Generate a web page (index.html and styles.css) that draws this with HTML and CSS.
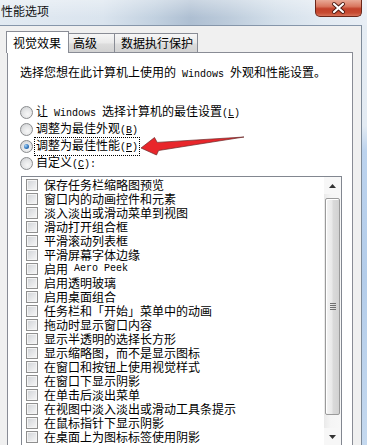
FILE: index.html
```html
<!DOCTYPE html>
<html lang="zh-CN">
<head>
<meta charset="utf-8">
<title>性能选项</title>
<link rel="stylesheet" href="styles.css">
</head>
<body>
<div class="titlebar">
  <div class="title">性能选项</div>
  <div class="close">
    <svg width="45" height="16" viewBox="0 0 45 16">
      <path d="M18 4 L27 12 M27 4 L18 12" stroke="#4a1a12" stroke-width="4" stroke-linecap="round"/>
      <path d="M18 4 L27 12 M27 4 L18 12" stroke="#ffffff" stroke-width="2.2" stroke-linecap="round"/>
    </svg>
  </div>
</div>
<div class="window">
  <div class="client">
    <div class="tabs">
      <div class="tab active">视觉效果</div>
      <div class="tab second">高级</div>
      <div class="tab third">数据执行保护</div>
    </div>
    <div class="panel">
      <div class="desc">选择您想在此计算机上使用的<span class="lat"> Windows </span>外观和性能设置。</div>
      <div class="radios">
        <div class="radio-row"><span class="radio"></span><span class="rlabel">让<span class="lat"> Windows </span>选择计算机的最佳设置<span class="lat">(<u>L</u>)</span></span></div>
        <div class="radio-row"><span class="radio"></span><span class="rlabel">调整为最佳外观<span class="lat">(<u>B</u>)</span></span></div>
        <div class="radio-row"><span class="radio checked"></span><span class="rlabel focus">调整为最佳性能<span class="lat">(<u>P</u>)</span></span></div>
        <div class="radio-row"><span class="radio"></span><span class="rlabel">自定义<span class="lat">(<u>C</u>):</span></span></div>
      </div>
      <div class="listbox">
        <div class="items">
          <div class="item"><span class="cb"></span>保存任务栏缩略图预览</div>
          <div class="item"><span class="cb"></span>窗口内的动画控件和元素</div>
          <div class="item"><span class="cb"></span>淡入淡出或滑动菜单到视图</div>
          <div class="item"><span class="cb"></span>滑动打开组合框</div>
          <div class="item"><span class="cb"></span>平滑滚动列表框</div>
          <div class="item"><span class="cb"></span>平滑屏幕字体边缘</div>
          <div class="item"><span class="cb"></span>启用<span class="lat"> Aero Peek</span></div>
          <div class="item"><span class="cb"></span>启用透明玻璃</div>
          <div class="item"><span class="cb"></span>启用桌面组合</div>
          <div class="item"><span class="cb"></span>任务栏和「开始」菜单中的动画</div>
          <div class="item"><span class="cb"></span>拖动时显示窗口内容</div>
          <div class="item"><span class="cb"></span>显示半透明的选择长方形</div>
          <div class="item"><span class="cb"></span>显示缩略图，而不是显示图标</div>
          <div class="item"><span class="cb"></span>在窗口和按钮上使用视觉样式</div>
          <div class="item"><span class="cb"></span>在窗口下显示阴影</div>
          <div class="item"><span class="cb"></span>在单击后淡出菜单</div>
          <div class="item"><span class="cb"></span>在视图中淡入淡出或滑动工具条提示</div>
          <div class="item"><span class="cb"></span>在鼠标指针下显示阴影</div>
          <div class="item"><span class="cb"></span>在桌面上为图标标签使用阴影</div>
        </div>
        <div class="scrollbar">
          <div class="sbtn">
            <svg width="7" height="4" viewBox="0 0 7 4"><path d="M0 4 L3.5 0 L7 4 Z" fill="#333"/></svg>
          </div>
          <div class="track-top"></div>
          <div class="thumb">
            <svg width="6" height="8" viewBox="0 0 6 8">
              <path d="M0 0.5 H6 M0 2.5 H6 M0 4.5 H6 M0 6.5 H6" stroke="#707070" stroke-width="1"/>
            </svg>
          </div>
          <div class="track-bottom"></div>
          <div class="sbtn">
            <svg width="7" height="4" viewBox="0 0 7 4"><path d="M0 0 L7 0 L3.5 4 Z" fill="#333"/></svg>
          </div>
        </div>
      </div>
    </div>
  </div>
  <div class="frame"></div>
</div>
<svg class="arrow" width="367" height="445" viewBox="0 0 367 445">
  <path d="M141 148 L154.5 137.5 L157.2 142.4 L244 137 L158.6 150.5 L156.5 155 Z" fill="#e8262b" stroke="#6a2a2a" stroke-width="0.7" stroke-linejoin="round"/>
</svg>
</body>
</html>
```

FILE: styles.css
```css
html, body {
  margin: 0;
  padding: 0;
}

body {
  width: 367px;
  height: 445px;
  overflow: hidden;
  position: relative;
  font-family: "Noto Sans CJK SC", "Noto Sans", sans-serif;
  font-size: 12px;
  color: #000;
  background: #dfe8f1;
}

.lat {
  font-family: "Liberation Mono", "DejaVu Sans Mono", monospace;
  font-size: 10px;
  white-space: pre;
}

.titlebar {
  height: 25px;
  display: flex;
  align-items: flex-start;
  background:
    linear-gradient(180deg, rgba(255, 255, 255, 0.35), rgba(255, 255, 255, 0) 70%),
    linear-gradient(90deg, #e2eaf2 0%, #dae4ee 28%, #c2d1e0 42%, #aebfd2 52%, #bccbdb 62%, #d3dfea 75%, #e2eaf2 88%, #e8eef5 100%);
}

.title {
  padding: 4px 0 0 1px;
  line-height: 14px;
  font-size: 12px;
  color: #111;
}

.close {
  margin-left: auto;
  margin-right: 5px;
  width: 45px;
  height: 16px;
  border: 1px solid #6b2619;
  border-top: none;
  border-radius: 0 0 5px 5px;
  background: linear-gradient(180deg, #e9a996 0%, #d9775f 40%, #c2412a 55%, #c74a31 80%, #d6725a 100%);
  display: flex;
}

.window {
  display: flex;
  height: 420px;
}

.client {
  width: 361px;
  background: #f0f0f0;
  border-top: 1px solid #8696aa;
  border-right: 1px solid #7d8a99;
  padding-top: 5px;
}

.frame {
  flex: 1;
  background: linear-gradient(180deg, #e6edf4 0%, #e3ebf3 24%, #bcd3ee 30%, #b4cdea 60%, #c5d9ef 100%);
}

.tabs {
  display: flex;
  align-items: flex-end;
  margin-left: 6px;
  height: 21px;
}

.tab {
  box-sizing: border-box;
  line-height: 14px;
  white-space: nowrap;
  border: 1px solid #898c95;
  border-bottom: none;
}

.tab.active {
  position: relative;
  z-index: 1;
  width: 63px;
  height: 22px;
  margin-bottom: -1px;
  padding: 4px 0 0 6px;
  background: #fff;
}

.tab.second,
.tab.third {
  height: 19px;
  padding-top: 2px;
  border-left: none;
  background: linear-gradient(180deg, #f6f6f6 0%, #e9e9e9 50%, #dcdcdc 55%, #d2d2d2 100%);
}

.tab.second {
  width: 46px;
  padding-left: 4px;
}

.tab.third {
  width: 83px;
  padding-left: 6px;
}

.panel {
  box-sizing: border-box;
  margin-left: 7px;
  width: 346px;
  height: 400px;
  border: 1px solid #898c95;
  background: #fff;
  padding: 12px 0 0 12px;
}

.desc {
  line-height: 14px;
  white-space: nowrap;
}

.radios {
  margin-top: 22px;
}

.radio-row {
  height: 17px;
  display: flex;
  align-items: center;
}

.radio {
  box-sizing: border-box;
  width: 13px;
  height: 13px;
  border-radius: 50%;
  border: 1px solid #8a8c8e;
  background: radial-gradient(circle at 60% 65%, #f7f7f7 0%, #e6e7e8 45%, #c9cbce 100%);
  display: flex;
  align-items: center;
  justify-content: center;
}

.radio.checked::after {
  content: "";
  width: 5px;
  height: 5px;
  border-radius: 50%;
  background: radial-gradient(circle at 35% 35%, #a9d3f5 0%, #3a7fc4 50%, #1b4a86 100%);
}

.rlabel {
  margin-left: 2px;
  line-height: 14px;
  white-space: nowrap;
  padding: 0 1px;
}

.rlabel.focus {
  outline: 1px dotted #000;
}

.listbox {
  box-sizing: border-box;
  margin-top: 4px;
  margin-left: 1px;
  width: 321px;
  height: 270px;
  border: 1px solid #828790;
  display: flex;
}

.items {
  flex: 1;
  padding-top: 1px;
}

.item {
  height: 14px;
  line-height: 14px;
  display: flex;
  align-items: center;
  padding-left: 4px;
  white-space: nowrap;
}

.cb {
  box-sizing: border-box;
  width: 12px;
  height: 12px;
  margin-right: 6px;
  border: 1px solid #8f8f8f;
  background: linear-gradient(135deg, #cfd2d6 0%, #e6e7e9 55%, #f8f8f8 100%);
  box-shadow: inset 0 0 0 1px #f4f4f4;
  flex: none;
}

.scrollbar {
  width: 17px;
  display: flex;
  flex-direction: column;
  background: linear-gradient(90deg, #eaeaea 0%, #f5f5f5 40%, #f7f7f7 100%);
}

.sbtn {
  height: 17px;
  display: flex;
  align-items: center;
  justify-content: center;
  background: #f7f7f7;
}

.track-top {
  height: 4px;
}

.track-bottom {
  flex: 1;
}

.thumb {
  box-sizing: border-box;
  height: 217px;
  margin: 0 1px;
  border: 1px solid #9a9a9a;
  border-radius: 2px;
  background: linear-gradient(90deg, #f4f4f4 0%, #e9e9e9 45%, #dadada 55%, #d2d2d2 100%);
  box-shadow: inset 1px 1px 0 #ffffff;
  display: flex;
  align-items: center;
  justify-content: center;
}

.arrow {
  position: absolute;
  left: 0;
  top: 0;
  pointer-events: none;
}
```
